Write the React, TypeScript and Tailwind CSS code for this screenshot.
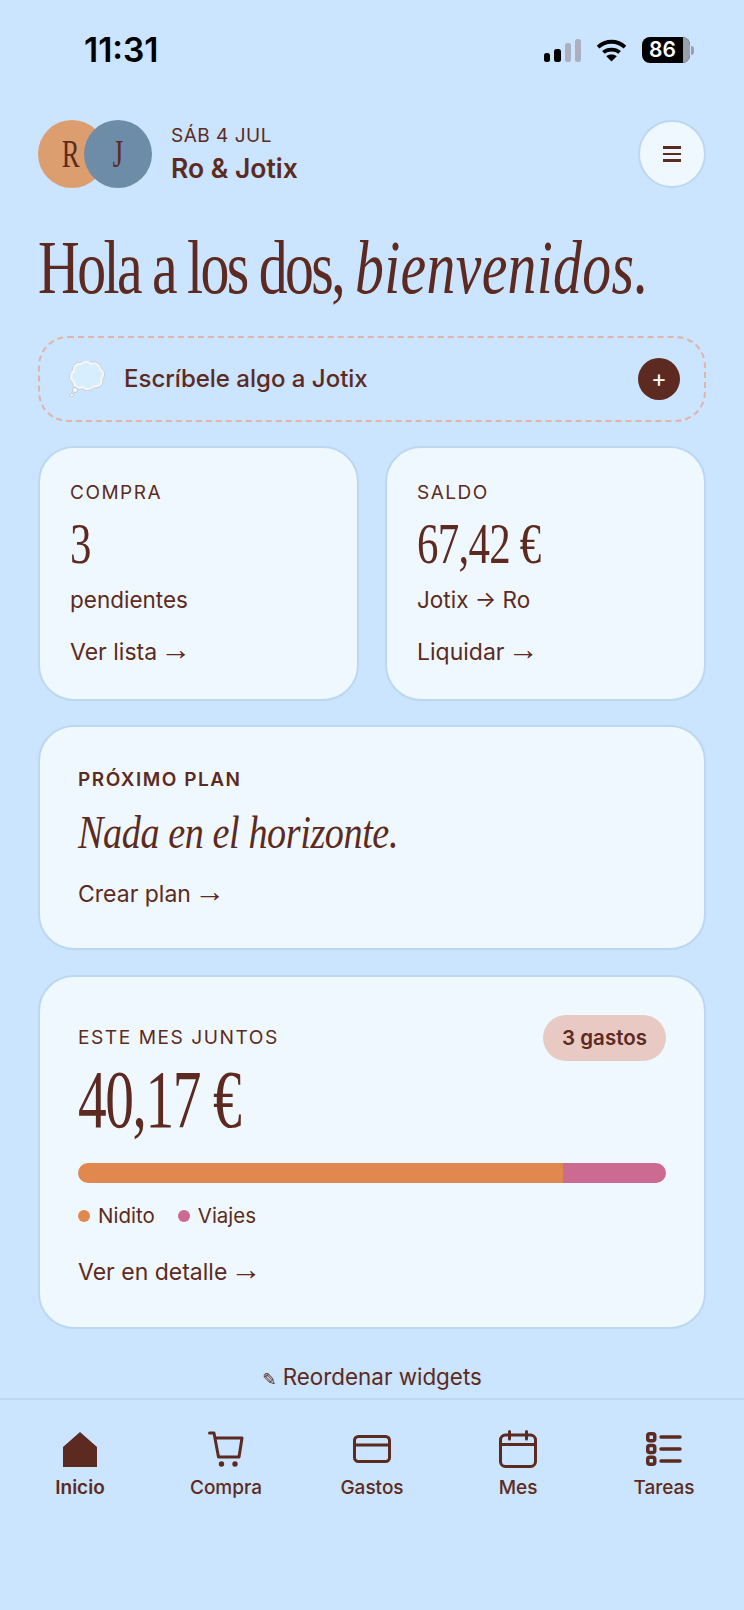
const sans = "font-['Inter','Liberation_Sans',sans-serif]";
const serif = "font-['Liberation_Serif',serif]";

function Signal() {
  return (
    <svg width="37" height="23" viewBox="0 0 37 23">
      <rect x="0" y="14" width="6" height="9" rx="2.5" fill="#000" />
      <rect x="10" y="10" width="7" height="13" rx="2.5" fill="#000" />
      <rect x="21" y="4" width="6" height="19" rx="2.5" fill="#aab0c0" />
      <rect x="31" y="0" width="6" height="23" rx="2.5" fill="#aab0c0" />
    </svg>
  );
}

function Wifi() {
  return (
    <svg width="31" height="23" viewBox="0 0 32 24" fill="none" stroke="#000" strokeWidth="4">
      <path d="M2 8.5 C10 1 22 1 30 8.5" />
      <path d="M7.5 14 C12 10 20 10 24.5 14" />
      <path d="M16 23.5 L10.5 18 C13 15.5 19 15.5 21.5 18 Z" fill="#000" stroke="none" />
    </svg>
  );
}

function Battery() {
  return (
    <div className="flex items-center">
      <div className="flex h-[26px] w-[48px] overflow-hidden rounded-[8px] bg-black">
        <div className={`w-[41px] text-center text-[21px] leading-[26px] font-semibold text-white ${sans}`}>86</div>
        <div className="w-[7px] bg-[#9aa0aa]" />
      </div>
      <div className="ml-[1px] h-[9px] w-[3px] rounded-r-full bg-[#9aa0aa]" />
    </div>
  );
}

function ThoughtBubble() {
  return (
    <svg width="36" height="36" viewBox="0 0 36 36">
      <path
        d="M12 3 C15 0 20 0 22 3 C26 1 31 4 31 8 C35 10 35 16 32 18 C34 23 29 27 25 25 C22 29 16 29 14 26 C10 28 5 26 5 21 C1 19 1 12 5 10 C4 6 8 2 12 3 Z"
        fill="#d6eefd"
        stroke="#c9cbd0"
        strokeWidth="3.5"
      />
      <path
        d="M12 3 C15 0 20 0 22 3 C26 1 31 4 31 8 C35 10 35 16 32 18 C34 23 29 27 25 25 C22 29 16 29 14 26 C10 28 5 26 5 21 C1 19 1 12 5 10 C4 6 8 2 12 3 Z"
        fill="#d6eefd"
        stroke="#f6f6f7"
        strokeWidth="2"
      />
      <circle cx="6" cy="29" r="2.6" fill="#f6f6f7" stroke="#c9cbd0" />
      <circle cx="2.8" cy="34" r="1.8" fill="#f6f6f7" stroke="#c9cbd0" />
    </svg>
  );
}

function Arrow({ label }: { label: string }) {
  return (
    <div className="h-[28px] text-[23px] leading-[28px] whitespace-nowrap">
      {label} <span className="-ml-[3px] inline-block font-['Liberation_Sans',sans-serif] text-[31px] leading-[20px]">→</span>
    </div>
  );
}

function SmallCard({ title, value, note, link }: { title: string; value: string; note: string; link: string }) {
  return (
    <div className="flex h-[255px] flex-1 flex-col rounded-[36px] border-2 border-[#bcd8ee] bg-[#f0f8ff] pt-[33px] pl-[30px]">
      <div className="text-[19px] leading-[24px] tracking-[1.5px]">{title}</div>
      <div className={`mt-[6px] origin-left scale-x-[0.74] text-[58px] leading-[66px] tracking-[-1px] whitespace-nowrap ${serif}`}>{value}</div>
      <div className="mt-[9px] text-[22.5px] leading-[28px]">{note}</div>
      <div className="mt-[24px]">
        <Arrow label={link} />
      </div>
    </div>
  );
}

function HomeIcon() {
  return (
    <svg width="34" height="35" viewBox="0 0 34 35">
      <path d="M0 15 L17 0 L34 15 V35 H0 Z" fill="#5c2a20" />
    </svg>
  );
}

function CartIcon() {
  return (
    <svg width="36" height="36" viewBox="0 0 36 36" fill="none" stroke="#5c2a20" strokeWidth="3" strokeLinecap="round" strokeLinejoin="round">
      <path d="M1.5 2 H6 L10.5 26 H31 L34 7 H7" />
      <circle cx="13.5" cy="33" r="1.2" fill="#5c2a20" />
      <circle cx="27" cy="33" r="1.2" fill="#5c2a20" />
    </svg>
  );
}

function CardIcon() {
  return (
    <svg width="38" height="28" viewBox="0 0 38 28" fill="none" stroke="#5c2a20" strokeWidth="3">
      <rect x="1.5" y="1.5" width="35" height="25" rx="4" />
      <path d="M1.5 10 H36.5" />
    </svg>
  );
}

function CalendarIcon() {
  return (
    <svg width="38" height="38" viewBox="0 0 38 38" fill="none" stroke="#5c2a20" strokeWidth="3" strokeLinecap="round">
      <rect x="1.5" y="5" width="35" height="31.5" rx="5" />
      <path d="M1.5 14.5 H36.5 M10.5 1.5 V9 M27.5 1.5 V9" />
    </svg>
  );
}

function ListIcon() {
  return (
    <svg width="36" height="34" viewBox="0 0 36 34" fill="none" stroke="#5c2a20" strokeWidth="3.5" strokeLinecap="round">
      <rect x="1.75" y="1.75" width="7" height="7" rx="2" />
      <rect x="1.75" y="13.5" width="7" height="7" rx="2" />
      <rect x="1.75" y="25.25" width="7" height="7" rx="2" />
      <path d="M15 5 H34 M15 17 H34 M15 29 H34" />
    </svg>
  );
}

const tabs = [
  { label: "Inicio", icon: <HomeIcon />, active: true },
  { label: "Compra", icon: <CartIcon />, active: false },
  { label: "Gastos", icon: <CardIcon />, active: false },
  { label: "Mes", icon: <CalendarIcon />, active: false },
  { label: "Tareas", icon: <ListIcon />, active: false },
];

export default function App() {
  return (
    <div className={`flex h-[1610px] w-[744px] flex-col overflow-hidden bg-[#cbe4ff] text-[#5c2a20] ${sans}`}>
      {/* Status bar */}
      <div className="flex h-[100px] items-center justify-between pr-[50px] pl-[84px] text-black">
        <div className="text-[33.5px] leading-[40px] font-semibold">11:31</div>
        <div className="flex items-center gap-[15px]">
          <Signal />
          <Wifi />
          <Battery />
        </div>
      </div>

      <div className="flex flex-1 flex-col px-[38px]">
        {/* Couple header */}
        <div className="mt-[20px] flex items-center">
          <div className="flex">
            <div className={`flex h-[68px] w-[68px] items-center justify-center rounded-full bg-[#dc9d6f] pr-[2px] text-[41px] ${serif}`}>
              <span className="scale-x-[0.65]">R</span>
            </div>
            <div className={`-ml-[22px] flex h-[68px] w-[68px] items-center justify-center rounded-full bg-[#6d8ca8] text-[41px] ${serif}`}>
              <span className="scale-x-[0.65]">J</span>
            </div>
          </div>
          <div className="ml-[19px] flex-1 pb-[2px]">
            <div className="text-[19px] leading-[26px] tracking-[0.5px]">SÁB 4 JUL</div>
            <div className="mt-[3px] text-[26.5px] leading-[32px] font-semibold">Ro &amp; Jotix</div>
          </div>
          <div className="flex h-[68px] w-[68px] items-center justify-center rounded-full border-2 border-[#bcd8ee] bg-[#f0f8ff]">
            <div className="flex w-[18px] flex-col gap-[4px]">
              <div className="h-[2.5px] bg-[#5c2a20]" />
              <div className="h-[2.5px] bg-[#5c2a20]" />
              <div className="h-[2.5px] bg-[#5c2a20]" />
            </div>
          </div>
        </div>

        {/* Greeting */}
        <h1 className={`mt-[37px] origin-left scale-x-[0.76] text-[76px] leading-[84px] font-normal whitespace-nowrap ${serif}`}>
          <span className="tracking-[-3.35px]">Hola a los dos, </span>
          <em className="tracking-[0.4px]">bienvenidos.</em>
        </h1>

        {/* Note prompt */}
        <div className="mt-[27px] flex h-[86px] items-center rounded-[30px] border-2 border-dashed border-[#e0b4aa] pr-[24px] pl-[29px]">
          <ThoughtBubble />
          <div className="ml-[19px] flex-1 text-[24px] leading-[30px] font-medium">Escríbele algo a Jotix</div>
          <div className="flex h-[42px] w-[42px] items-center justify-center rounded-full bg-[#5c2a20] text-[24px] leading-none text-white">+</div>
        </div>

        {/* Shopping and balance */}
        <div className="mt-[24px] flex gap-[26px]">
          <SmallCard title="COMPRA" value="3" note="pendientes" link="Ver lista" />
          <SmallCard title="SALDO" value="67,42 €" note="Jotix → Ro" link="Liquidar" />
        </div>

        {/* Next plan */}
        <div className="mt-[24px] flex h-[225px] flex-col rounded-[36px] border-2 border-[#bcd8ee] bg-[#f0f8ff] pt-[41px] pl-[38px]">
          <div className="text-[19px] leading-[24px] font-semibold tracking-[1.5px]">PRÓXIMO PLAN</div>
          <div className={`mt-[13px] origin-left scale-x-[0.83] text-[46px] leading-[56px] tracking-[-0.5px] whitespace-nowrap italic ${serif}`}>Nada en el horizonte.</div>
          <div className="mt-[19px]">
            <Arrow label="Crear plan" />
          </div>
        </div>

        {/* Monthly spending */}
        <div className="mt-[25px] flex h-[354px] flex-col rounded-[36px] border-2 border-[#bcd8ee] bg-[#f0f8ff] px-[38px] pt-[38px]">
          <div className="flex items-start justify-between">
            <div className="mt-[10px] text-[19.2px] leading-[24px] tracking-[1.5px]">ESTE MES JUNTOS</div>
            <div className="flex h-[46px] w-[123px] items-center justify-center rounded-full bg-[#e9c9c4] text-[20.5px] font-semibold">3 gastos</div>
          </div>
          <div className={`-mt-[5px] origin-left scale-x-[0.7] text-[82px] leading-[88px] tracking-[-2px] whitespace-nowrap ${serif}`}>40,17 €</div>
          <div className="mt-[19px] flex h-[20px] overflow-hidden rounded-full">
            <div className="w-[485px] bg-[#e0884d]" />
            <div className="flex-1 bg-[#cc6a92]" />
          </div>
          <div className="mt-[20px] flex items-center text-[20.5px] leading-[26px]">
            <div className="h-[12px] w-[12px] rounded-full bg-[#e0884d]" />
            <div className="ml-[8px]">Nidito</div>
            <div className="ml-[23px] h-[12px] w-[12px] rounded-full bg-[#cc6a92]" />
            <div className="ml-[8px]">Viajes</div>
          </div>
          <div className="mt-[29px]">
            <Arrow label="Ver en detalle" />
          </div>
        </div>

        {/* Reorder link */}
        <div className="mt-[33px] text-center text-[22.4px] leading-[30px]">
          <span className="font-['DejaVu_Sans',sans-serif] text-[17px]">✎</span> Reordenar widgets
        </div>
      </div>

      {/* Tab bar */}
      <nav className="flex h-[212px] border-t-2 border-[#bcd8ee] px-[7px] pt-[30px]">
        {tabs.map((tab) => (
          <div key={tab.label} className="flex flex-1 flex-col items-center">
            <div className="flex h-[38px] items-center justify-center">{tab.icon}</div>
            <div className={`mt-[8px] text-[19px] leading-[24px] ${tab.active ? "font-semibold" : "font-medium"}`}>{tab.label}</div>
          </div>
        ))}
      </nav>
    </div>
  );
}
